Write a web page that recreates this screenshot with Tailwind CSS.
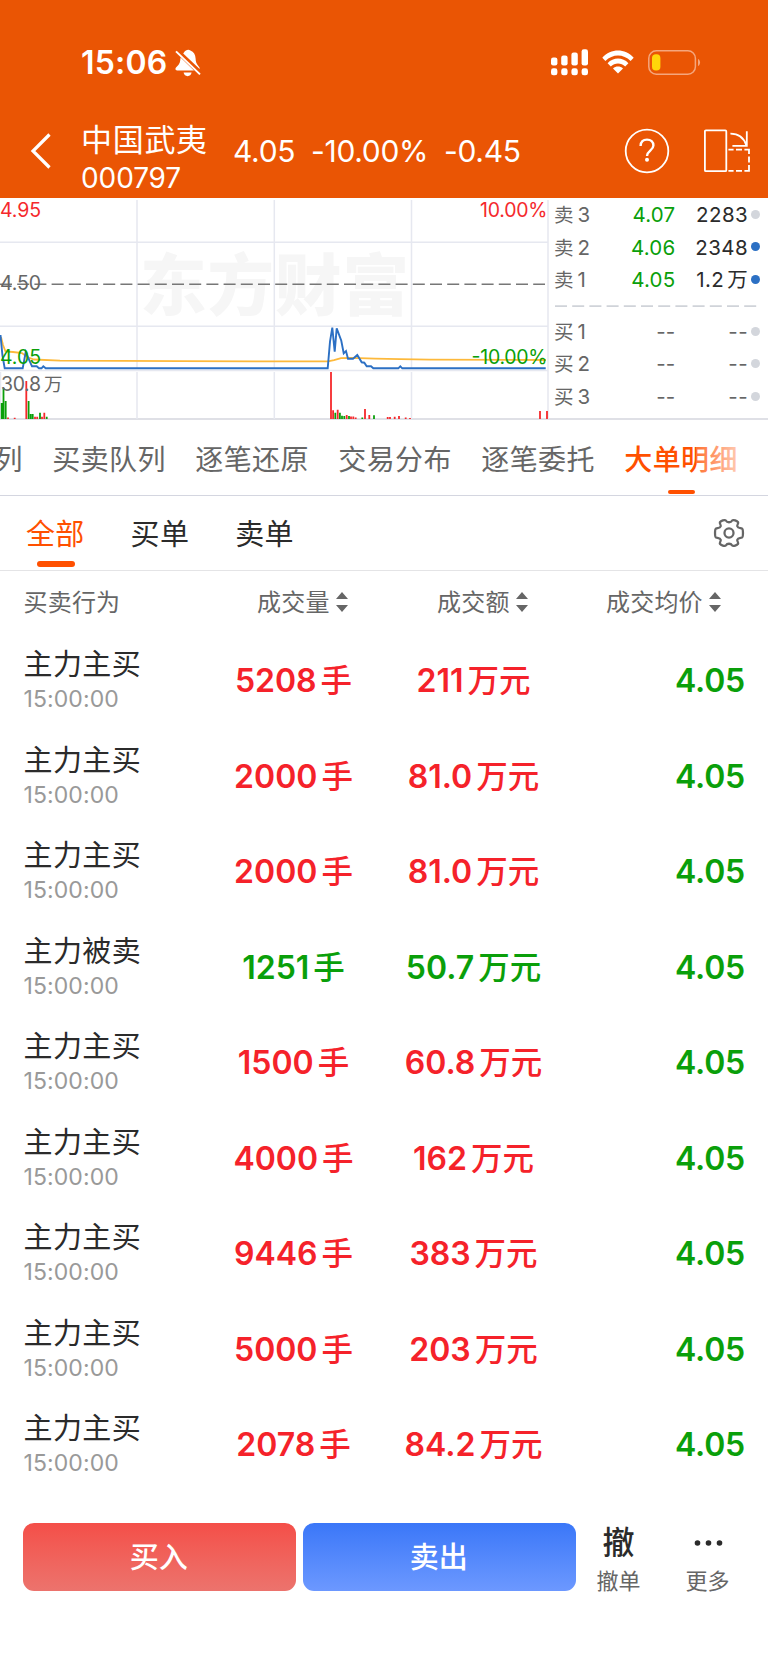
<!DOCTYPE html>
<html lang="zh-CN">
<head>
    <meta charset="UTF-8">
    <meta name="viewport" content="width=device-width, initial-scale=1.0">
    <title>中国武夷 000797</title>
    <script src="https://cdn.jsdelivr.net/npm/@tailwindcss/browser@4"></script>
</head>
<body class="bg-white font-['Inter','Noto_Sans_CJK_SC',sans-serif] text-[#2b2b2b]">
    <div class="w-[768px] h-[1670px] overflow-hidden flex flex-col">

        <header class="h-[198px] shrink-0 bg-[#ea5504] text-white">
            <!-- status bar -->
            <div class="h-[120px] pt-[42px] pl-[81px] pr-[67px] flex justify-between">
                <div class="h-10 flex items-center gap-[9px]">
                    <span class="w-[85px] pt-[2px] text-[32px] leading-10 font-semibold tracking-[0.2px] whitespace-nowrap">15:06</span>
                    <svg class="w-[26px] h-[28px] mt-px" viewBox="0 0 26 28" fill="none">
                        <path d="M8.2 4.6C9 3 9.8 2.2 11 1.4C12.2.4 14.2.4 15.4 1.4C18.8 2.8 20.4 5.4 20.6 9.4C20.7 12.6 21.4 14.4 23 16.4L24.6 18.8V20L8.2 4.6Z" fill="#fff"/>
                        <path d="M5.6 8.6L19 21.4H2C.4 21.4 0 20 .8 18.8C2.6 16.6 5 14.8 5.2 11.4Z" fill="#fff"/>
                        <path d="M8.6 23.6H16.6C16.2 25.8 14.6 27.2 12.6 27.2S9 25.8 8.6 23.6Z" fill="#fff"/>
                        <path d="M1 2.4L25 25.4" stroke="#fff" stroke-width="2"/>
                    </svg>
                </div>
                <div class="h-10 flex items-center">
                    <svg class="w-[38px] h-[28px]" viewBox="0 0 38 28" fill="#fff">
                        <rect x="0" y="9.5" width="6.4" height="8" rx="2.2"/>
                        <rect x="10.2" y="7.5" width="6.4" height="10" rx="2.2"/>
                        <rect x="20.4" y="4.5" width="6.4" height="13" rx="2.2"/>
                        <rect x="30.6" y="1.2" width="6.4" height="16.3" rx="2.2"/>
                        <rect x="0" y="20.3" width="6.4" height="7" rx="2.4"/>
                        <rect x="10.2" y="20.3" width="6.4" height="7" rx="2.4"/>
                        <rect x="20.4" y="20.3" width="6.4" height="7" rx="2.4"/>
                        <rect x="30.6" y="20.3" width="6.4" height="7" rx="2.4"/>
                    </svg>
                    <svg class="w-8 h-6 ml-[13px]" viewBox="0 0 32 24">
                        <path d="M.3 7.8C9 -1.9 23 -1.9 31.7 7.8L28.6 11C21.4 3.6 10.6 3.6 3.4 11Z" fill="#fff"/>
                        <path d="M5.6 13.2C11.4 7 20.6 7 26.4 13.2L23.2 16.4C19.2 12.4 12.8 12.4 8.8 16.4Z" fill="#fff"/>
                        <path d="M11 18.4C13.8 15.8 18.2 15.8 21 18.4L16 23.6Z" fill="#fff"/>
                    </svg>
                    <svg class="w-[53px] h-[25px] ml-[14px]" viewBox="0 0 53 25">
                        <rect x=".8" y=".8" width="46.6" height="23.4" rx="7.5" fill="none" stroke="#f5a67d" stroke-width="1.5"/>
                        <rect x="4" y="4.2" width="8.4" height="16.4" rx="3.8" fill="#ffd60a"/>
                        <path d="M50 9C52.8 10.2 52.8 14.8 50 16Z" fill="#f5a67d"/>
                    </svg>
                </div>
            </div>
            <!-- stock title -->
            <div class="h-[78px] pl-[30px] flex">
                <svg class="w-[22px] h-[36px] mt-[13px]" viewBox="0 0 22 36">
                    <path d="M19.5 1.5L3 18L19.5 34.5" fill="none" stroke="#fff" stroke-width="3.2"/>
                </svg>
                <div class="w-[152px] ml-[29px] whitespace-nowrap">
                    <div class="h-[39px] leading-[39px] text-[31px] tracking-[0.7px]">中国武夷</div>
                    <div class="h-[38px] leading-[38px] text-[28px] tracking-[-0.1px]">000797</div>
                </div>
                <div class="h-[62px] flex items-center text-[30px] tracking-[-0.3px] whitespace-nowrap">
                    <span class="w-[78px]">4.05</span>
                    <span class="w-[133px]">-10.00%</span>
                    <span class="w-[180px]">-0.45</span>
                </div>
                <svg class="w-[46px] h-[46px] mt-[8px]" viewBox="0 0 46 46" fill="none" stroke="#fff">
                    <circle cx="23" cy="23" r="21.3" stroke-width="1.8"/>
                    <path d="M16.6 18C16.6 13.8 19.2 11.6 23 11.6S29.4 14 29.4 17.6C29.4 22.4 23 23 23 28" stroke-width="2.4"/>
                    <circle cx="23" cy="31.8" r="2" fill="#fff" stroke="none"/>
                </svg>
                <svg class="w-[48px] h-[44px] ml-[33px] mt-[9px]" viewBox="0 0 48 44" fill="none" stroke="#fff" stroke-width="1.8">
                    <rect x="1.9" y="1.4" width="21.4" height="40.8" rx="1"/>
                    <path d="M27.4 4.6C35 4.6 41 9 43.4 16.4M43.8 2.2V16.8H29.4"/>
                    <path d="M25.4 20.6H30.6M33 20.6H39M41.4 20.6H46V25M46 27.6V33.4M46 36V41.8H41.4M39 41.8H33M30.6 41.8H25.4"/>
                </svg>
            </div>
        </header>

        <!-- minute chart and order book -->
        <section class="h-[222px] shrink-0 flex border-b-2 border-[#dfe0e6]">
            <svg class="w-[549px] h-[221px] shrink-0" viewBox="0 198 549 221" font-size="19.5">
                <text x="140" y="310" font-size="66.5" font-weight="900" letter-spacing="1" fill="#f6f6f6">东方财富</text>
                <g stroke="#e6e8f0" stroke-width="1.5" fill="none">
                    <path d="M137 200V369M137 372V419M274.3 200V369M274.3 372V419M411.5 200V369M411.5 372V419M548 200V419M.5 372V419"/>
                    <path d="M0 242.3H548M0 326.3H548M0 370.5H548"/>
                </g>
                <path d="M0 284.3H545" stroke="#777" stroke-width="1.6" stroke-dasharray="12 5.2"/>
                <path d="M1 337L3 345L5.5 351.5L13 352L22 353L27 357L34 359.5L60 360.6L180 361.2L328 361.4L334 360.2L341 358.2L352 357.8L375 358.6L400 359.2L430 359.7L546 360" fill="none" stroke="#fdb93b" stroke-width="1.8"/>
                <path d="M.5 335L2.4 355L4.7 368.3H22.7L25.7 352L28.3 358L32 366.3H36.7L39 368.3H41.5L43.3 366.3L45.7 368.3H327.7L330 341.7L332.3 327.7L334.7 351.7L336.7 328.3L341.3 340.7L343.7 353.3L346 351L348 358.7H353L357.3 355L361.7 362.3L364.3 362.7L366.7 366.3H371L373.3 368.3H398.3L400.3 366.3L402.3 368.3H545.7" fill="none" stroke="#2c70c4" stroke-width="1.9"/>
                <!-- volume bars -->
                <g stroke-width="1.8">
                    <path d="M1.7 419V403M3.5 419V388M5.7 419V401M28.6 419V401M30.7 419V414M32.7 419V414M40 419V412.7M46.7 419V416.7M335.3 419V412.7M339.9 419V412.7M342 419V415.7M344.3 419V416M349 419V416M362.3 419V417.5M374 419V415.3" stroke="#0a9f0a"/>
                    <path d="M8 419V417.5M14.7 419V417.7M26.3 419V381M35 419V416.7M37.2 419V416.7M42 419V416.7M44.3 419V412.7M331 419V372M333.1 419V410.3M337.7 419V409.7M346.7 419V415M351 419V416.5M353.3 419V416.5M355.7 419V417.5M365 419V409M369.3 419V415M387.7 419V417M390 419V417M394.7 419V416.7M399 419V416M405.7 419V417.5M410 419V418M540 419V411M547 419V411" stroke="#f5292c"/>
                </g>
                <text x="0" y="217" fill="#f5292c" textLength="41">4.95</text>
                <text x="547.5" y="217" fill="#f5292c" text-anchor="end" textLength="67.5">10.00%</text>
                <text x="0" y="290" fill="#666" textLength="41">4.50</text>
                <text x="0" y="363.5" fill="#0a9f0a" textLength="41">4.05</text>
                <text x="547.5" y="363.5" fill="#0a9f0a" text-anchor="end" textLength="76">-10.00%</text>
                <text y="390.5" fill="#666"><tspan x="1" textLength="40">30.8</tspan><tspan x="44" font-size="18.5">万</tspan></text>
            </svg>
            <div class="w-[206px] ml-[5px] pt-px text-[20.5px] leading-[32.6px]">
                <div id="asks"></div>
                <svg class="block w-[206px] h-[19px]" viewBox="0 0 206 19">
                    <path d="M1 9.2H203" stroke="#d0d3d9" stroke-width="1.8" stroke-dasharray="12 5.2"/>
                </svg>
                <div id="bids"></div>
            </div>
        </section>

        <!-- detail tabs -->
        <nav class="h-[76px] shrink-0 relative overflow-hidden border-b border-[#d4d6e0] text-[28px] tracking-[0.4px] text-[#666] whitespace-nowrap">
            <div class="flex gap-[29.4px] -ml-[5.5px] leading-[81px]">
                <span>列</span>
                <span>买卖队列</span>
                <span>逐笔还原</span>
                <span>交易分布</span>
                <span>逐笔委托</span>
                <span class="relative font-medium text-[#ff5000]">大单明细
                    <i class="absolute left-[44px] top-[70px] w-[27px] h-1 rounded-full bg-[#ff5000]"></i>
                </span>
            </div>
            <div class="absolute right-0 top-0 w-[72px] h-[68px] bg-linear-to-r from-white/20 to-white/80 to-70%"></div>
        </nav>

        <!-- buy / sell filter -->
        <div class="h-[75px] shrink-0 pl-[26px] pr-[22px] flex items-center justify-between border-b border-[#e4e4e6]">
            <div class="flex gap-[46px] text-[29px] leading-[77px] h-[74px] tracking-[0.3px]">
                <span class="relative text-[#ff5000]">全部
                    <i class="absolute left-[11px] top-[65px] w-[38px] h-[6px] rounded-full bg-[#ff5000]"></i>
                </span>
                <span>买单</span>
                <span>卖单</span>
            </div>
            <svg class="w-[34px] h-[32px]" viewBox="-18 -17 36 34" fill="none" stroke="#666" stroke-width="2.4" stroke-linejoin="round">
                <path d="M-3.4 -13.3C-2 -10.8 2 -10.8 3.4 -13.3C4.6 -14.6 8.6 -12.8 9.7 -11.4C10.3 -10.4 8.4 -8.6 8.8 -7.2C9.4 -5 12 -5.4 13.8 -4.8C15.2 -4 15.2 4 13.8 4.8C12 5.4 9.4 5 8.8 7.2C8.4 8.6 10.3 10.4 9.7 11.4C8.6 12.8 4.6 14.6 3.4 13.3C2 10.8 -2 10.8 -3.4 13.3C-4.6 14.6 -8.6 12.8 -9.7 11.4C-10.3 10.4 -8.4 8.6 -8.8 7.2C-9.4 5 -12 5.4 -13.8 4.8C-15.2 4 -15.2 -4 -13.8 -4.8C-12 -5.4 -9.4 -5 -8.8 -7.2C-8.4 -8.6 -10.3 -10.4 -9.7 -11.4C-8.6 -12.8 -4.6 -14.6 -3.4 -13.3Z"/>
                <circle r="4.8"/>
            </svg>
        </div>

        <!-- table head -->
        <div class="h-[62px] shrink-0 pl-[23.5px] flex text-[24px] leading-[63px] text-[#666]">
            <span class="w-[233.5px] tracking-[0.2px]">买卖行为</span>
            <span class="w-[180px] flex items-center gap-[6.5px] tracking-[0.2px]">成交量
                <svg class="w-3 h-5" viewBox="0 0 12 20" fill="#666"><path d="M0 7L6 0L12 7ZM0 13L6 20L12 13Z"/></svg>
            </span>
            <span class="w-[169px] flex items-center gap-[6.5px] tracking-[0.2px]">成交额
                <svg class="w-3 h-5" viewBox="0 0 12 20" fill="#666"><path d="M0 7L6 0L12 7ZM0 13L6 20L12 13Z"/></svg>
            </span>
            <span class="flex items-center gap-[6px] tracking-[0.2px]">成交均价
                <svg class="w-3 h-5" viewBox="0 0 12 20" fill="#666"><path d="M0 7L6 0L12 7ZM0 13L6 20L12 13Z"/></svg>
            </span>
        </div>

        <main id="orders" class="h-[872px] shrink-0"></main>

        <!-- bottom actions -->
        <footer class="h-[86px] shrink-0 pl-[23px] pt-[17.5px] flex">
            <button class="w-[272.5px] h-[68.5px] pr-[1px] pt-px rounded-[11px] bg-linear-to-b from-[#f44e48] to-[#ec736d] text-white text-[29px] font-medium">买入</button>
            <button class="w-[272.5px] h-[68.5px] pr-[1px] pt-px ml-[7.5px] rounded-[11px] bg-linear-to-b from-[#3a77f8] to-[#6c98ff] text-white text-[29px] font-medium">卖出</button>
            <div class="w-[86px] text-center">
                <div class="h-10 text-[32px] leading-10 font-medium">撤</div>
                <div class="h-9 text-[22px] leading-9 text-[#666]">撤单</div>
            </div>
            <div class="w-[90px] ml-px text-center">
                <svg class="w-[90px] h-10" viewBox="0 0 90 40" fill="#2b2b2b">
                    <circle cx="34.5" cy="20" r="2.8"/>
                    <circle cx="45.5" cy="20" r="2.8"/>
                    <circle cx="56.5" cy="20" r="2.8"/>
                </svg>
                <div class="h-9 text-[22px] leading-9 text-[#666]">更多</div>
            </div>
        </footer>
    </div>

    <script>
        const asks = [["卖", "3", "4.07", "2283", "bg-[#d3d6dc]"], ["卖", "2", "4.06", "2348", "bg-[#2c70c4]"], ["卖", "1", "4.05", "1.2<span class=\"ml-[3px] text-[20px]\">万</span>", "bg-[#2c70c4]"]];
        const bids = [["买", "1", "--", "--", "bg-[#d3d6dc]"], ["买", "2", "--", "--", "bg-[#d3d6dc]"], ["买", "3", "--", "--", "bg-[#d3d6dc]"]];
        const orders = [
            ["主力主买", "5208", "211"],
            ["主力主买", "2000", "81.0"],
            ["主力主买", "2000", "81.0"],
            ["主力被卖", "1251", "50.7"],
            ["主力主买", "1500", "60.8"],
            ["主力主买", "4000", "162"],
            ["主力主买", "9446", "383"],
            ["主力主买", "5000", "203"],
            ["主力主买", "2078", "84.2"]
        ];

        function level([side, no, price, volume, dot]) {
            const priceColor = price === "--" ? "text-[#666]" : "text-[#0a9f0a]";
            const volumeColor = volume === "--" ? "text-[#666]" : "text-[#2b2b2b]";
            return `<div class="h-[32.6px] flex items-center">
                <span class="w-[50px] text-[#666]"><span class="text-[19.5px]">${side}</span><span class="ml-1">${no}</span></span>
                <span class="w-[72px] text-right tracking-[0.2px] ${priceColor}">${price}</span>
                <span class="w-[73px] text-right tracking-[0.4px] ${volumeColor}">${volume}</span>
                <i class="w-[9px] h-[9px] ml-[3px] mb-[2px] rounded-full ${dot}"></i>
            </div>`;
        }

        document.getElementById("asks").innerHTML = asks.map(level).join("");
        document.getElementById("bids").innerHTML = bids.map(level).join("");

        document.getElementById("orders").innerHTML = orders.map(([name, volume, amount]) => {
            const color = name === "主力被卖" ? "text-[#0a9f0a]" : "text-[#f5222a]";
            return `<div class="h-[95.5px] pl-[23.5px] pr-6 flex items-center text-[32px] font-semibold whitespace-nowrap">
                <div class="w-[180px] pb-[4px] font-normal">
                    <div class="h-[41px] leading-[41px] text-[29px] tracking-[0.4px]">${name}</div>
                    <div class="h-[28px] leading-[28px] text-[23px] tracking-[0.1px] text-[#999]">15:00:00</div>
                </div>
                <div class="w-[180px] pt-px text-center ${color}">${volume}<span class="ml-[4px] text-[31.5px] font-medium">手</span></div>
                <div class="w-[180px] pt-px text-center ${color}">${amount}<span class="ml-[4px] text-[31.5px] font-medium">万元</span></div>
                <div class="flex-1 pt-px text-right -mr-px tracking-[-0.2px] text-[#0a9f0a]">4.05</div>
            </div>`;
        }).join("");
    </script>
</body>
</html>
